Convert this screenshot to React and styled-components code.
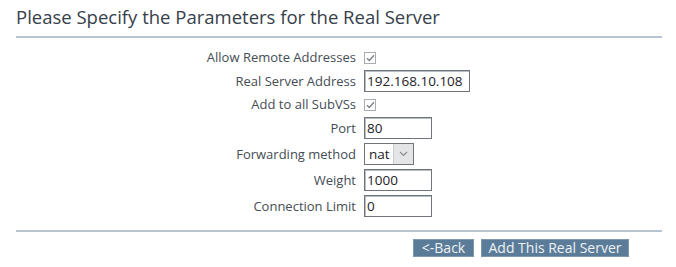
import React from "react";
import styled, { createGlobalStyle } from "styled-components";

const Global = createGlobalStyle`
  html, body { margin: 0; padding: 0; background: #ffffff; }
  body { font-family: "Open Sans", "DejaVu Sans", sans-serif; }
`;

const Page = styled.div`
  width: 646px;
  padding: 5px 14px 0 16px;
`;

const Title = styled.h2`
  margin: 0;
  font-size: 18.5px;
  font-weight: 400;
  line-height: 23px;
  color: #36404a;
`;

const Rule = styled.div`
  height: 2px;
  background: #b7c3ce;
  margin-top: ${(p) => p.$top}px;
`;

const Form = styled.div`
  display: grid;
  grid-template-columns: 340px auto;
  column-gap: 8px;
  row-gap: 4px;
  align-items: center;
  margin-top: 11px;
`;

const Label = styled.div`
  text-align: right;
  font-size: 13px;
  color: #454c54;
  line-height: 17px;
  white-space: nowrap;
`;

const Cell = styled.div`
  display: flex;
  align-items: center;
  min-height: 17px;
`;

const Box = styled.span`
  display: inline-flex;
  align-items: center;
  justify-content: center;
  width: 10px;
  height: 10px;
  border: 1px solid #a9adb1;
  background: #fff;
`;

const TextInput = styled.div`
  box-sizing: border-box;
  width: ${(p) => p.$w}px;
  height: 22px;
  border: 1px solid #70757b;
  box-shadow: inset 1px 1px 0 #b9bdc1;
  padding: 0 2px;
  font-size: 13.5px;
  line-height: 20px;
  color: #1e2226;
  background: #fff;
  white-space: nowrap;
  overflow: hidden;
`;

const Select = styled.div`
  box-sizing: border-box;
  width: 50px;
  height: 22px;
  border: 1px solid #70757b;
  display: flex;
  background: #fff;
`;

const SelectValue = styled.span`
  flex: 1;
  padding-left: 4px;
  font-size: 13.5px;
  line-height: 20px;
  color: #1e2226;
`;

const SelectArrow = styled.span`
  width: 19px;
  background: #e4e5e6;
  border-left: 1px solid #c8cacc;
  display: flex;
  align-items: center;
  justify-content: center;
`;

const Actions = styled.div`
  display: flex;
  justify-content: flex-end;
  gap: 7px;
  padding-right: 33px;
  margin-top: 7px;
`;

const Button = styled.button`
  height: 18px;
  width: ${(p) => p.$w}px;
  padding: 0;
  border: 1px solid #7e98ae;
  background: #5b7c98;
  color: #eef2f5;
  font-family: "Open Sans", "DejaVu Sans", sans-serif;
  font-size: 14px;
  line-height: 16px;
  cursor: pointer;
  white-space: nowrap;
`;

const Check = () => (
  <Box>
    <svg width="9" height="8" viewBox="0 0 9 8">
      <path d="M1 4.2 L3.3 6.5 L8 1.2" fill="none" stroke="#7b7f84" strokeWidth="1.3" />
    </svg>
  </Box>
);

const Chevron = () => (
  <svg width="9" height="6" viewBox="0 0 9 6">
    <path d="M1 1 L4.5 4.5 L8 1" fill="none" stroke="#8a8e92" strokeWidth="1.2" />
  </svg>
);

export default function App() {
  return (
    <Page>
      <Global />
      <Title>Please Specify the Parameters for the Real Server</Title>
      <Rule $top={8} />
      <Form>
        <Label>Allow Remote Addresses</Label>
        <Cell><Check /></Cell>
        <Label>Real Server Address</Label>
        <Cell><TextInput $w={106}>192.168.10.108</TextInput></Cell>
        <Label>Add to all SubVSs</Label>
        <Cell><Check /></Cell>
        <Label>Port</Label>
        <Cell><TextInput $w={68}>80</TextInput></Cell>
        <Label>Forwarding method</Label>
        <Cell>
          <Select>
            <SelectValue>nat</SelectValue>
            <SelectArrow><Chevron /></SelectArrow>
          </Select>
        </Cell>
        <Label>Weight</Label>
        <Cell><TextInput $w={68}>1000</TextInput></Cell>
        <Label>Connection Limit</Label>
        <Cell><TextInput $w={68}>0</TextInput></Cell>
      </Form>
      <Rule $top={13} />
      <Actions>
        <Button $w={61}>&lt;-Back</Button>
        <Button $w={148}>Add This Real Server</Button>
      </Actions>
    </Page>
  );
}
